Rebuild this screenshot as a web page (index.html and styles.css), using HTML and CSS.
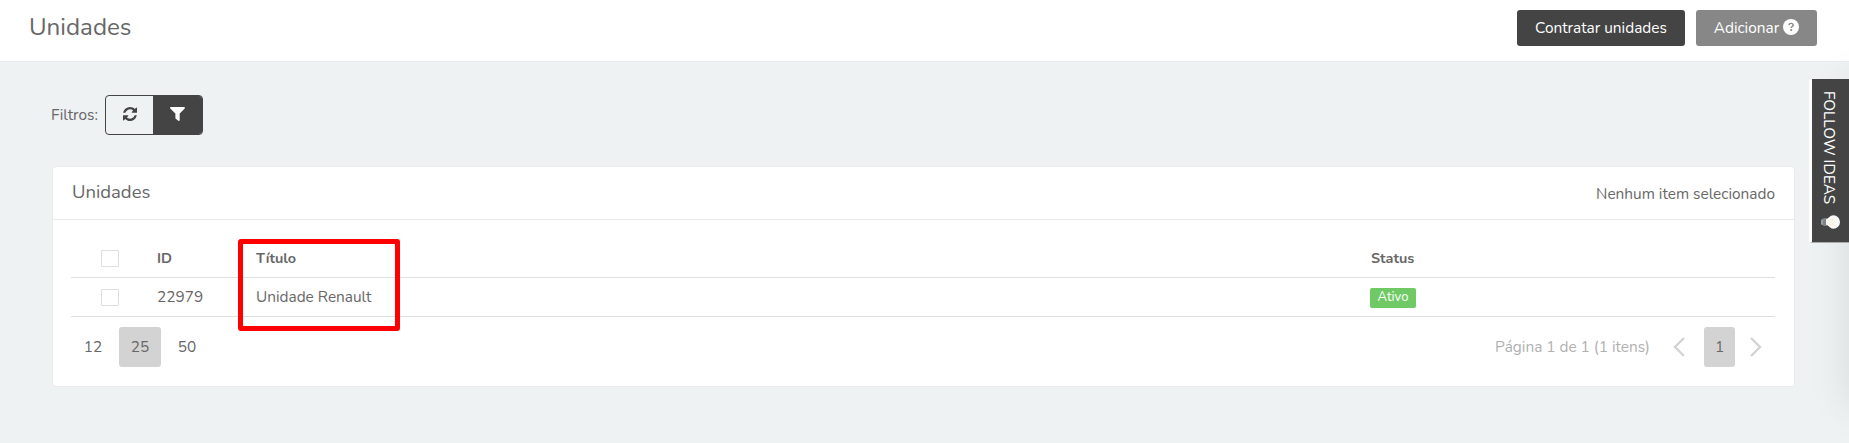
FILE: index.html
```html
<!DOCTYPE html>
<html lang="pt-br">
<head>
    <meta charset="UTF-8">
    <meta name="viewport" content="width=device-width, initial-scale=1.0">
    <title>Unidades</title>
    <link rel="stylesheet" href="styles.css">
</head>
<body>

<header class="topbar">
    <h1 class="page-title">Unidades</h1>
    <div class="topbar-actions">
        <button class="btn btn-dark">Contratar unidades</button>
        <button class="btn btn-disabled">
            <span>Adicionar</span>
            <svg class="help-icon" viewBox="0 0 16 16">
                <circle cx="8" cy="8" r="8" fill="#fff"/>
                <path d="M5.8 6.2C6 4.9 6.9 4.4 8 4.4c1.3 0 2.2.7 2.2 1.800C10.200 7.500 8.200 7.500 8.200 9" fill="none" stroke="#878787" stroke-width="1.400"/>
                <rect x="7.300" y="10.200" width="1.800" height="1.800" fill="#878787"/>
            </svg>
        </button>
    </div>
</header>

<main class="content">
    <!-- Filtros -->
    <div class="filters">
        <span class="filters-label">Filtros:</span>
        <div class="btn-group">
            <button class="filter-btn">
                <svg width="14" height="14" viewBox="0 0 1536 1536" fill="#444">
                    <path d="M1511 928q0 5-1 7-64 268-268 434.500T764 1536q-146 0-282.500-55T238 1324l-129 129q-19 19-45 19t-45-19-19-45V960q0-26 19-45t45-19h448q26 0 45 19t19 45-19 45l-137 137q71 66 161 102t187 36q134 0 250-65t186-179q11-17 53-117 8-23 30-23h192q13 0 22.500 9.500t9.500 22.500zm25-800v448q0 26-19 45t-45 19h-448q-26 0-45-19t-19-45 19-45l138-138Q969 256 768 256q-134 0-250 65T332 500q-11 17-53 117-8 23-30 23H50q-13 0-22.500-9.500T18 608v-7q65-268 270-434.500T768 0q146 0 284 55.500T1297 212l130-129q19-19 45-19t45 19 19 45z"/>
                </svg>
            </button>
            <button class="filter-btn active">
                <svg width="15" height="14" viewBox="0 0 15 14" fill="#fff">
                    <path d="M.9 0h13.200c.8 0 1.100.9.600 1.400L9.700 6.600v6.400c0 .8-.7 1.100-1.300.700L5.800 11.700c-.3-.2-.4-.4-.4-.8V6.600L.3 1.400C-.2.900.1 0 .9 0z"/>
                </svg>
            </button>
        </div>
    </div>

    <!-- Lista de unidades -->
    <section class="card">
        <div class="card-header">
            <h2 class="card-title">Unidades</h2>
            <span class="selected-info">Nenhum item selecionado</span>
        </div>
        <div class="card-body">
            <table class="units">
                <thead>
                    <tr>
                        <th class="col-check"><span class="checkbox"></span></th>
                        <th class="col-id">ID</th>
                        <th class="col-title">Título</th>
                        <th>Status</th>
                    </tr>
                </thead>
                <tbody>
                    <tr>
                        <td class="col-check"><span class="checkbox"></span></td>
                        <td class="col-id">22979</td>
                        <td class="col-title">Unidade Renault</td>
                        <td><span class="badge">Ativo</span></td>
                    </tr>
                </tbody>
            </table>
            <div class="pager">
                <div class="page-sizes">
                    <span class="page-size">12</span>
                    <span class="page-size selected">25</span>
                    <span class="page-size">50</span>
                </div>
                <div class="pages">
                    <span class="page-info">Página 1 de 1 (1 itens)</span>
                    <svg class="chevron" viewBox="0 0 12 20"><path d="M11 1L2 10l9 9"/></svg>
                    <span class="page">1</span>
                    <svg class="chevron" viewBox="0 0 12 20"><path d="M1 1l9 9-9 9"/></svg>
                </div>
            </div>
            <div class="highlight"></div>
        </div>
    </section>
</main>

<div class="side-panel"></div>
<div class="follow-tab">
    <span class="follow-text">FOLLOW IDEAS</span>
    <svg class="bulb" viewBox="0 0 19 14">
        <rect x="0" y="4" width="3" height="6" rx="1.500" fill="#9a9fa3"/>
        <rect x="2" y="3" width="4" height="8" rx="1" fill="#7c858c"/>
        <path d="M5 4.200C8 3.500 9 .3 12.300.3a6.700 6.700 0 0 1 0 13.400C9 13.700 8 10.500 5 9.800z" fill="#fafafa"/>
        <path d="M5.500 5.500l7-1.500-2 3 2 3-7-1.500" fill="none" stroke="#fbe6c8" stroke-width=".8"/>
    </svg>
</div>

</body>
</html>
```

FILE: styles.css
```css
* {
    box-sizing: border-box;
}
body {
    font-family: Nunito, Lato, sans-serif;
    font-size: 15.4px;
    line-height: 24px;
    margin: 0;
    height: 443px;
    overflow: hidden;
    color: #676767;
    background-color: #eef2f3;
}
button {
    font: inherit;
    cursor: pointer;
}
.topbar {
    display: flex;
    justify-content: space-between;
    align-items: flex-start;
    height: 62px;
    padding: 10px 32px 0 29px;
    background-color: #fff;
    border-bottom: 1px solid #e9ecec;
}
.page-title {
    margin: 2px 0 0;
    font-size: 24.2px;
    font-weight: 400;
    line-height: 32px;
}
.topbar-actions {
    display: flex;
    gap: 11px;
}
.btn {
    display: flex;
    align-items: center;
    justify-content: center;
    gap: 4px;
    height: 36px;
    padding: 0;
    color: #fff;
    border: none;
    border-radius: 3px;
}
.btn-dark {
    width: 168px;
    background-color: #444;
}
.btn-disabled {
    width: 121px;
    background-color: #878787;
}
.help-icon {
    width: 16px;
    height: 16px;
    margin-top: -2px;
}
.content {
    padding: 33px 54px 0 52px;
}
.filters {
    display: flex;
    align-items: center;
    height: 40px;
    margin-left: -1px;
}
.filters-label {
    width: 54px;
}
.btn-group {
    display: flex;
    width: 98px;
    height: 40px;
    border: 1px solid #444;
    border-radius: 4px;
    overflow: hidden;
}
.filter-btn {
    display: flex;
    width: 47px;
    align-items: center;
    justify-content: center;
    padding: 0 0 2px;
    border: none;
    background: transparent;
}
.filter-btn.active {
    width: 49px;
    background-color: #444;
}
.card {
    height: 221px;
    margin-top: 31px;
    background-color: #fff;
    border: 1px solid #e9ecec;
    border-radius: 4px;
}
.card-header {
    display: flex;
    justify-content: space-between;
    height: 53px;
    padding: 13px 19px 0 19px;
    border-bottom: 1px solid #e8eaea;
}
.card-title {
    margin: 0;
    font-size: 18.5px;
    font-weight: 400;
}
.selected-info {
    margin-top: 2px;
}
.card-body {
    position: relative;
    padding: 19px 19px 0 18px;
}
.units {
    width: 100%;
    table-layout: fixed;
    border-collapse: separate;
    border-spacing: 0;
}
.units th,
.units td {
    height: 39px;
    padding: 0;
    text-align: left;
    border-bottom: 1px solid #dedfdf;
}
.units th {
    font-size: 14.4px;
}
.col-check {
    width: 86px;
}
.col-id {
    width: 99px;
}
.col-title {
    width: 1115px;
}
.checkbox {
    display: block;
    width: 18px;
    height: 17px;
    margin-left: 30px;
    border: 1px solid #dedede;
    border-radius: 1px;
}
.badge {
    display: block;
    width: 46px;
    height: 20px;
    margin: 1px 0 0 -1px;
    color: #fff;
    font-size: 13px;
    line-height: 18px;
    text-align: center;
    background-color: #6fca66;
    border-radius: 2px;
}
.pager {
    display: flex;
    justify-content: space-between;
    margin-top: 10px;
    line-height: 40px;
}
.page-sizes {
    display: flex;
    gap: 5px;
    padding-left: 1px;
}
.page-size {
    width: 42px;
    text-align: center;
    border-radius: 3px;
}
.page-size.selected,
.page {
    background-color: #d3d3d3;
}
.pages {
    display: flex;
    align-items: center;
    padding-right: 13px;
}
.page-info {
    margin-right: 23px;
    color: #b0b0b0;
}
.chevron {
    width: 12px;
    height: 20px;
    fill: none;
    stroke: #d3d3d3;
    stroke-width: 2.4;
}
.page {
    width: 31px;
    margin: 0 15px 0 19px;
    text-align: center;
    border-radius: 3px;
}
.highlight {
    position: absolute;
    left: 185px;
    top: 19px;
    width: 162px;
    height: 92px;
    border: 5px solid #f00;
    border-radius: 3px;
}
/* painel recolhido fora da tela, só a sombra aparece */
.side-panel {
    position: fixed;
    top: 79px;
    left: 1849px;
    width: 300px;
    height: 328px;
    box-shadow: 0 0 40px rgba(0, 0, 0, 0.1);
}
.follow-tab {
    position: fixed;
    top: 79px;
    right: 0;
    display: flex;
    flex-direction: column;
    align-items: center;
    width: 40px;
    height: 164px;
    padding: 12px 4px 0 0;
    color: #fff;
    background-color: #444;
    border-left: 3px solid #fff;
    border-bottom: 1px solid #aaa;
    border-radius: 3px 0 0 3px;
}
.follow-text {
    height: 124px;
    writing-mode: vertical-rl;
    white-space: nowrap;
}
.bulb {
    width: 19px;
    height: 14px;
    margin-left: 3px;
}
```
